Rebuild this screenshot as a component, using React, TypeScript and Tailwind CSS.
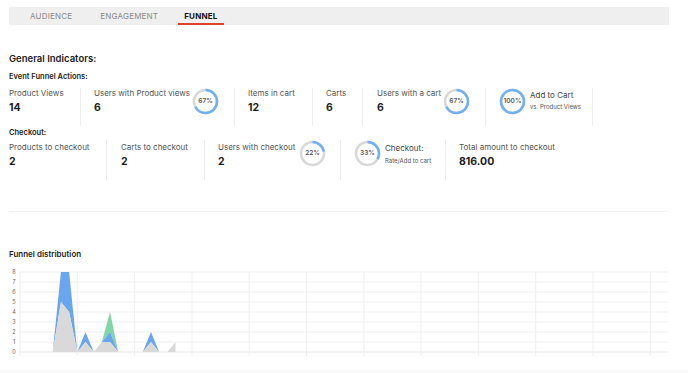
import React from "react";

const font = { fontFamily: "Inter, 'Open Sans', sans-serif" };

const Donut = ({ pct, label }: { pct: number; label: string }) => {
  const r = 11.5;
  const c = 2 * Math.PI * r;
  return (
    <div className="relative w-[27px] h-[27px] shrink-0">
      <svg width="27" height="27" viewBox="0 0 27 27" className="-rotate-90">
        <circle cx="13.5" cy="13.5" r={r} fill="none" stroke="#d9d9d9" strokeWidth="2.5" />
        <circle
          cx="13.5"
          cy="13.5"
          r={r}
          fill="none"
          stroke="#6fb0f7"
          strokeWidth="2.5"
          strokeDasharray={`${(c * pct) / 100} ${c}`}
        />
      </svg>
      <span className="absolute inset-0 flex items-center justify-center text-[6.5px] font-semibold text-[#555]">
        {label}
      </span>
    </div>
  );
};

const Stat = ({ label, value }: { label: string; value: string }) => (
  <div className="flex flex-col">
    <p className="text-[8px] leading-[10px] text-[#555]">{label}</p>
    <p className="mt-[4px] text-[10.5px] leading-[12px] font-bold text-[#222]">{value}</p>
  </div>
);

const Chart = () => {
  const x0 = 20;
  const step = 57.3 / 7;
  const y = (v: number) => 351 - v * 10;
  const gray = [0, 0, 0, 0, 0, 5, 4, 0, 1, 0, 1, 1, 0, 0, 0, 0, 1, 0, 0, 1];
  const blue = [0, 0, 0, 0, 0, 8, 8, 0, 2, 0, 1, 2, 0, 0, 0, 0, 2, 0, 0, 1];
  const green = [0, 0, 0, 0, 0, 8, 8, 0, 2, 0, 1, 4, 0, 0, 0, 0, 2, 0, 0, 1];
  const area = (top: number[], bottom: number[] | null) => {
    const pts = top.map((v, i) => `${x0 + i * step},${y(v)}`);
    const base = bottom
      ? bottom.map((v, i) => `${x0 + i * step},${y(v)}`).reverse()
      : [`${x0 + (top.length - 1) * step},${y(0)}`, `${x0},${y(0)}`];
    return [...pts, ...base].join(" ");
  };
  const vlines = [20, 77.3, 134.6, 192, 249.2, 306.5, 363.8, 421, 478.4, 535.7, 593, 650.3];
  return (
    <svg width="688" height="104" viewBox="0 265 688 104" className="block -ml-[9px]">
      {[0, 1, 2, 3, 4, 5, 6, 7, 8].map((v) => (
        <g key={v}>
          <line x1="20" x2="668" y1={y(v)} y2={y(v)} stroke={v === 0 ? "#e6e6e6" : "#efefef"} strokeWidth="1" />
          <text x="14" y={y(v) + 2} fontSize="5.5" fill="#666" textAnchor="middle" style={font}>
            {v}
          </text>
        </g>
      ))}
      {vlines.map((x) => (
        <line key={x} x1={x} x2={x} y1="271" y2="355" stroke="#efefef" strokeWidth="1" />
      ))}
      <polygon points={area(green, blue)} fill="#7fd6a6" />
      <polygon points={area(blue, gray)} fill="#6aa6ee" />
      <polygon points={area(gray, null)} fill="#d9d9d9" />
    </svg>
  );
};

export default function App() {
  return (
    <div className="w-[688px] h-[373px] bg-white overflow-hidden" style={font}>
      <div className="mx-[9px] w-[660px] pt-[7px]">
        <div className="h-[18px] bg-[#efefef] flex items-stretch pl-[21px] text-[8px] tracking-[0.2px]">
          <div className="flex items-center text-[#8a8a8a]">AUDIENCE</div>
          <div className="flex items-center ml-[28px] text-[#8a8a8a]">ENGAGEMENT</div>
          <div className="flex items-center ml-[20px] px-[6px] font-bold text-[#111] border-b-2 border-[#e0412f] pt-[2px]">
            FUNNEL
          </div>
        </div>

        <p className="mt-[28px] text-[9.5px] leading-[12px] font-semibold text-[#222]">General Indicators:</p>
        <p className="mt-[7px] text-[7.5px] leading-[10px] font-semibold text-[#222]">Event Funnel Actions:</p>

        <div className="mt-[6px] flex h-[38px]">
          <div className="w-[72px] border-r border-[#eee]">
            <Stat label="Product Views" value="14" />
          </div>
          <div className="w-[154px] border-r border-[#eee] pl-[13px] pr-[15px] flex justify-between">
            <Stat label="Users with Product views" value="6" />
            <Donut pct={67} label="67%" />
          </div>
          <div className="w-[78px] border-r border-[#eee] pl-[13px]">
            <Stat label="Items in cart" value="12" />
          </div>
          <div className="w-[50px] border-r border-[#eee] pl-[13px]">
            <Stat label="Carts" value="6" />
          </div>
          <div className="w-[123px] border-r border-[#eee] pl-[14px] pr-[15px] flex justify-between">
            <Stat label="Users with a cart" value="6" />
            <Donut pct={67} label="67%" />
          </div>
          <div className="w-[107px] border-r border-[#eee] pl-[13px] flex gap-[4px]">
            <Donut pct={100} label="100%" />
            <div className="pt-[2px]">
              <p className="text-[8px] leading-[10px] text-[#444]">Add to Cart</p>
              <p className="mt-[3px] text-[6px] leading-[8px] text-[#555]">vs. Product Views</p>
            </div>
          </div>
        </div>

        <p className="mt-[2px] text-[7.5px] leading-[10px] font-semibold text-[#222]">Checkout:</p>

        <div className="mt-[2px] flex h-[40px]">
          <div className="w-[98px] border-r border-[#eee] pt-[2px]">
            <Stat label="Products to checkout" value="2" />
          </div>
          <div className="w-[98px] border-r border-[#eee] pl-[14px] pt-[2px]">
            <Stat label="Carts to checkout" value="2" />
          </div>
          <div className="w-[136px] border-r border-[#eee] pl-[13px] pr-[14px] pt-[2px] flex justify-between">
            <Stat label="Users with checkout" value="2" />
            <div className="mt-[-2px]">
              <Donut pct={22} label="22%" />
            </div>
          </div>
          <div className="w-[105px] border-r border-[#eee] pl-[13px] flex gap-[4px]">
            <Donut pct={33} label="33%" />
            <div className="pt-[3px]">
              <p className="text-[8px] leading-[10px] text-[#444]">Checkout:</p>
              <p className="mt-[4px] text-[6px] leading-[8px] text-[#555]">Rate/Add to cart</p>
            </div>
          </div>
          <div className="pl-[13px] pt-[2px]">
            <Stat label="Total amount to checkout" value="816.00" />
          </div>
        </div>

        <div className="mt-[31px] h-px bg-[#f3f3f3]" />

        <p className="mt-[37px] text-[8px] leading-[10px] font-semibold text-[#222]">Funnel distribution</p>

        <div className="mt-[7px]">
          <Chart />
        </div>
      </div>
      <div className="h-[4px] bg-[#fafafa]" />
    </div>
  );
}
